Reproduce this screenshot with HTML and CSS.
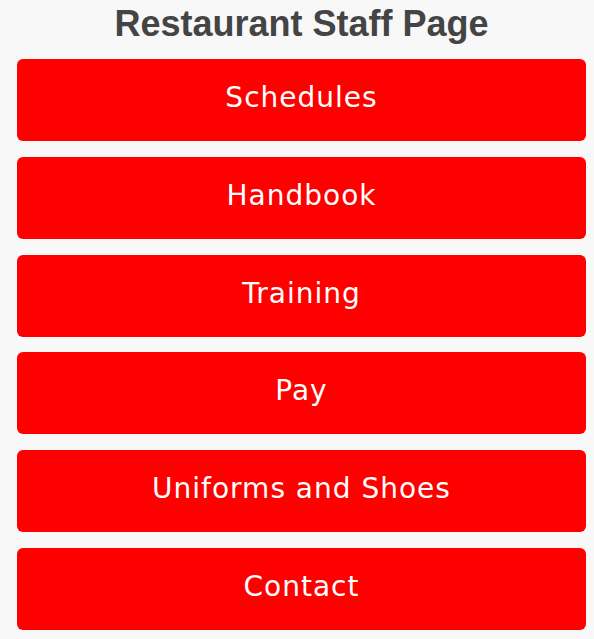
FILE: index.html
```html
<!DOCTYPE html>
<html lang="en">
<head>
  <meta charset="UTF-8" />
  <meta name="viewport" content="width=device-width, initial-scale=1.0"/>
  <title>Restaurant Staff Page</title>
  <link rel="stylesheet" href="styles.css">
</head>
<body>

<div class="page">
  <h1>Restaurant Staff Page</h1>

  <div class="menu">
    <a href="#" class="menu-button">Schedules</a>
    <a href="#" class="menu-button">Handbook</a>
    <a href="#" class="menu-button">Training</a>
    <a href="#" class="menu-button">Pay</a>
    <a href="#" class="menu-button">Uniforms and Shoes</a>
    <a href="#" class="menu-button">Contact</a>
  </div>
</div>

</body>
</html>
```

FILE: styles.css
```css
body {
  font-family: "DejaVu Sans", Verdana, sans-serif;
  margin: 0;
  background-color: #f8f8f8;
}

.page {
  padding: 0 8px 0 17px;
}

.page h1 {
  font-family: "Liberation Sans", Arial, sans-serif;
  font-size: 36px;
  font-weight: bold;
  line-height: 41px;
  color: #444444;
  text-align: center;
  margin: 3px 0 15px;
}

.menu-button {
  display: block;
  box-sizing: border-box;
  height: 82px;
  padding-top: 23px;
  margin-bottom: 15.8px;
  background-color: #ff0000;
  color: white;
  font-size: 28px;
  line-height: 32px;
  letter-spacing: 1px;
  text-align: center;
  text-decoration: none;
  border-radius: 6px;
}
```
